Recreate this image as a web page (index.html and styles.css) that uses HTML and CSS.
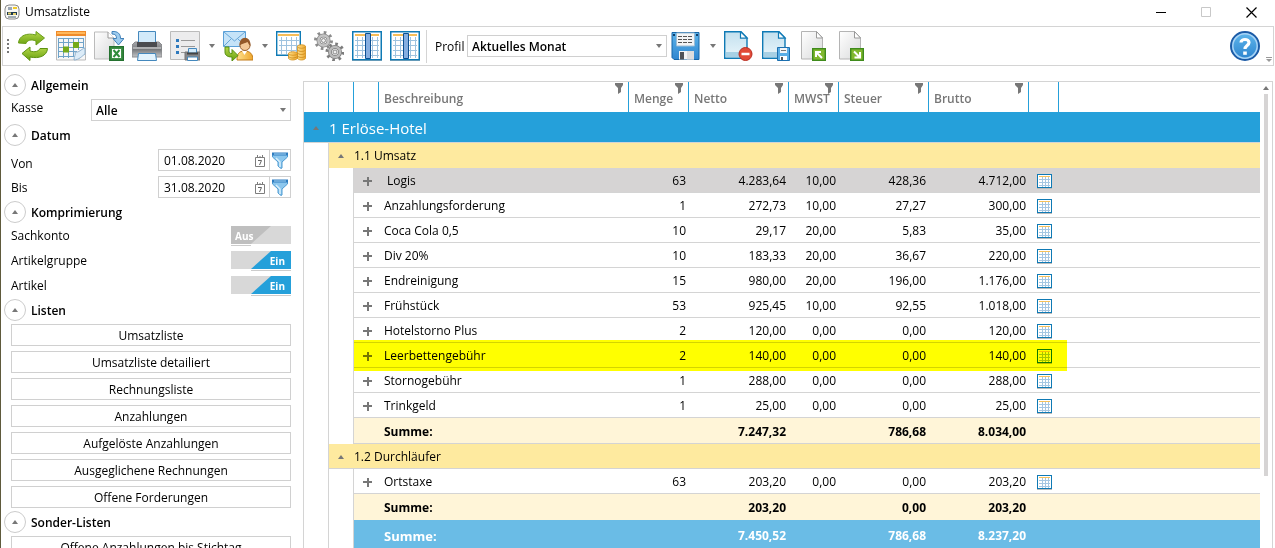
FILE: index.html
```html
<!DOCTYPE html>
<html lang="de">
<head>
<meta charset="utf-8">
<title>Umsatzliste</title>
<link rel="stylesheet" href="styles.css">
</head>
<body>
<svg class="defs" aria-hidden="true">
  <defs>
    <linearGradient id="paper" x1="0" y1="0" x2="1" y2="1"><stop offset="0" stop-color="#fff"/><stop offset="1" stop-color="#d9dadb"/></linearGradient>
    <linearGradient id="bluepaper" x1="0" y1="0" x2="0" y2="1"><stop offset="0" stop-color="#c3e0ee"/><stop offset="1" stop-color="#eaf6fb"/></linearGradient>
    <linearGradient id="green" x1="0" y1="0" x2="0" y2="1"><stop offset="0" stop-color="#b6d84b"/><stop offset="1" stop-color="#67a00f"/></linearGradient>
    <linearGradient id="steel" x1="0" y1="0" x2="0" y2="1"><stop offset="0" stop-color="#a9aaad"/><stop offset=".5" stop-color="#77797c"/><stop offset="1" stop-color="#c4c5c7"/></linearGradient>
    <linearGradient id="sky" x1="0" y1="0" x2="0" y2="1"><stop offset="0" stop-color="#5db4ea"/><stop offset="1" stop-color="#2f86d0"/></linearGradient>
    <linearGradient id="gold" x1="0" y1="0" x2="1" y2="0"><stop offset="0" stop-color="#ffe08a"/><stop offset="1" stop-color="#eda62d"/></linearGradient>
    <symbol id="cells" viewBox="0 0 15 15">
      <rect x="0" y="14" width="15" height="1" fill="#bcbcbc"/>
      <rect x=".5" y=".5" width="14" height="13" fill="#fff" stroke="#0f7ab5"/>
      <path d="M2 2.500h11" stroke="#f7c25b"/>
      <path d="M2 5.500h11M2 8.500h11M2 11.500h11M5.500 3v10M8.500 3v10M11.500 3v10" stroke="#a5c6e2"/>
    </symbol>
    <symbol id="filter" viewBox="0 0 8 11"><path d="M0 0h8v2L6 5v4L3 11V5L0 2z" fill="#777"/></symbol>
    <symbol id="funnel" viewBox="0 0 18 18">
      <path d="M1.500 3v3l5.500 5v4l3 2.500 1-.5v-6l5.500-5V3z" fill="#8cc7ee" stroke="#4f9bd2"/>
      <path d="M1 1.500h16v3H1z" fill="#2e7cc0"/><path d="M3 3h12" stroke="#a9d7f5"/><path d="M5 7l4 4v5" stroke="#d8effc" fill="none" stroke-width="1.500"/>
    </symbol>
    <symbol id="calendar" viewBox="0 0 12 13">
      <path d="M1.500 3.500h9v9h-9zM3.500 1v3M6 2v2M8.500 1v3" fill="none" stroke="#7d7d7d"/>
      <path d="M4 6.500h3.500L5.500 11" fill="none" stroke="#666"/>
    </symbol>
    <symbol id="columns" viewBox="0 0 30 30">
      <rect x="0" y="29" width="30" height="1" fill="#bbb"/>
      <rect x=".75" y=".75" width="28.500" height="28" fill="#fff" stroke="#0f7ab5" stroke-width="1.500"/>
      <path d="M3 4h24" stroke="#f6bd57" stroke-width="2"/>
      <path d="M3 9.500h24M3 14.500h24M3 19.500h24M3 24.500h24M5.500 6v21M10.500 6v21M20.500 6v21M25.500 6v21" stroke="#9fc3df"/>
      <path d="M13.500 2.500h5v25h-5z" fill="#86aee0" stroke="#0b4f92"/>
    </symbol>
    <symbol id="greypage" viewBox="0 0 28 30">
      <path d="M1.500.5h15l6 6v21.500h-21z" fill="url(#paper)" stroke="#b4b4b4"/>
      <path d="M16.500.5v6.500h6z" fill="#fff" stroke="#999"/>
      <rect x="12.700" y="17.700" width="12.600" height="11.600" fill="#80b82f" stroke="#3f8b1c" stroke-width="1.400"/>
    </symbol>
    <symbol id="bluepage" viewBox="0 0 28 30">
      <path d="M.7.7h16.300l6 6v20.600H.7z" fill="url(#bluepaper)" stroke="#0f7ab5" stroke-width="1.400"/>
      <path d="M2 21h20v5H2z" fill="#a7d0e4"/>
      <path d="M16.500.7v6.500h6.500z" fill="#fff" stroke="#0f7ab5" stroke-width="1.200"/>
    </symbol>
  </defs>
</svg>
<div class="window">
  <header class="titlebar">
    <svg class="app-icon" viewBox="0 0 16 16"><rect x="1" y="1" width="14" height="14" rx="4" fill="#f8f8f4" stroke="#8a8a8a"/><path d="M4 3h4v3H4z" fill="#9aa6b5"/><path d="M9 3h4v2H9z" fill="#f1c92a"/><path d="M3 8h10v3H3z" fill="#1f3a50"/><path d="M4 8.500h3v2H4zM9 9h3v2H9z" fill="#e8d470"/><path d="M4 13h8" stroke="#4d6272"/></svg>
    <h1 class="title">Umsatzliste</h1>
    <div class="window-controls">
      <button class="window-button" aria-label="Minimieren"><svg viewBox="0 0 11 11"><path d="M0 5.500h10" stroke="#000"/></svg></button>
      <button class="window-button" aria-label="Maximieren" disabled><svg viewBox="0 0 11 11"><path d="M.5.5h9v9h-9z" fill="none" stroke="#c8c8c8"/></svg></button>
      <button class="window-button" aria-label="Schließen"><svg viewBox="0 0 11 11"><path d="M.5.5l10 10M10.500.5l-10 10" stroke="#000" stroke-width="1.200"/></svg></button>
    </div>
  </header>

  <div class="toolbar" role="toolbar">
    <span class="grip"></span>
    <div class="tools">
      <button class="tool" aria-label="Aktualisieren"><svg viewBox="0 0 30 30">
        <path d="M.5 12C1 4.500 9 1.500 18 4V.5l8.500 6.500L18 14v-4C13 8 9.500 9 8 12.500z" fill="url(#green)" stroke="#6a9d1a"/>
        <path d="M29.500 17.500c-.5 7.500-8.500 10.500-17.500 8.500v3.500L4 22.500l8-6.500v4c5 1.500 8.500.5 10-2.500z" fill="url(#green)" stroke="#5d9210"/></svg></button>
      <button class="tool" aria-label="Kalender"><svg viewBox="0 0 30 30">
        <path d="M.5 1h29v28H.5z" fill="#f7f7f7" stroke="#bbb"/><path d="M0 0h30v5H0z" fill="#ef8b2a"/><path d="M1 2h28" stroke="#ffb85c" stroke-width="2"/>
        <path d="M3 7.500h24M3 11.500h24M3 16.500h24M3 20.500h18M3 25.500h15M2.500 7v20M7.500 7v20M12.500 7v20M17.500 7v18M22.500 7v12M27.500 7v10" stroke="#6fa3c9"/>
        <path d="M17 11h6v6h-6zM7 15.500h6v6H7z" fill="#74a919"/><path d="M18 29c0-4 2-5 1-8 4 1 6-3 10-4v6c-3 2-6 6-11 6z" fill="#dcecf8" stroke="#8fb2cf"/></svg></button>
      <button class="tool" aria-label="Excel-Export"><svg viewBox="0 0 30 30">
        <path d="M.5 1H14l6 6v21H.5z" fill="url(#paper)" stroke="#bbb"/><path d="M14 1v6h6" fill="#fff" stroke="#999"/>
        <path d="M18 .5c6-.5 8.500 2.500 8.500 7H30l-5.500 6.500L19 7.500h3.500c0-3-1-4.500-4.500-4.500z" fill="#9ccbee" stroke="#4080b8"/>
        <rect x="15.700" y="15.700" width="13.600" height="13.600" fill="#3e9147" stroke="#24712f" stroke-width="1.400"/><path d="M18 18h9v9h-9z" fill="#fff"/><path d="M19.500 19l6 7M25.500 19l-6 7" stroke="#2f8d3b" stroke-width="2"/></svg></button>
      <button class="tool" aria-label="Drucken"><svg viewBox="0 0 30 30">
        <path d="M3 11h24l3 3v12H0V14z" fill="url(#steel)" stroke="#8b8c8f"/><path d="M6.500.5h17V12h-17z" fill="#d2eafa" stroke="#4488bd"/><path d="M5 11h20v5H5z" fill="#4b4c50"/>
        <path d="M1 17h28" stroke="#ddd"/><path d="M6.500 22.500h17l1 7h-19z" fill="#e3f3fd" stroke="#4488bd"/></svg></button>
      <button class="tool" aria-label="Druckvorschau"><svg viewBox="0 0 30 30">
        <path d="M.5.5h29v28H.5z" fill="#ececed" stroke="#bbb"/><path d="M6 8h3v3H6zM6 14h3v3H6zM6 20h3v3H6z" fill="#2d79bd"/><path d="M11 9.500h14M11 15.500h14M11 21.500h5" stroke="#999"/>
        <path d="M15 21h15v8H15z" fill="#85878a" stroke="#777"/><path d="M18.500 17.500h8V22h-8z" fill="#d2eafa" stroke="#4488bd"/><path d="M17 21.500h11v2H17z" fill="#444"/><path d="M17.500 26h10v3.500h-10z" fill="#fff" stroke="#4488bd"/></svg></button>
      <button class="drop" aria-label="Druckoptionen"></button>
      <button class="tool" aria-label="E-Mail senden"><svg viewBox="0 0 30 30">
        <path d="M.5.5h22v15H.5z" fill="#c5e3f8" stroke="#5ba0d8"/><path d="M1 1l10.500 9L22 1M1 15l7-7M22 15l-7-7" fill="none" stroke="#66a6d8"/>
        <path d="M14 29c0-6 2-9 7.500-9s8.500 3 8.500 9z" fill="url(#gold)" stroke="#c37c1a"/><path d="M19 20l2.500 4 2.500-4z" fill="#fff"/><circle cx="22" cy="14.500" r="5" fill="#f3c898" stroke="#996130"/><path d="M16.500 15c-1-11 12-11 11 0-2-1-2-3-3-4-3 2-6 1-8 4z" fill="#94592a"/>
        <path d="M2 16h4v4c0 2 1 2.500 3 2.500V18.500l6 6-6 5.500v-4c-5 0-7-2-7-5z" fill="url(#green)" stroke="#569014"/></svg></button>
      <button class="drop" aria-label="E-Mail-Optionen"></button>
      <button class="tool" aria-label="Umsätze"><svg viewBox="0 0 30 30">
        <path d="M.7.7h23.600v23.600H.7z" fill="#fff" stroke="#0f7ab5" stroke-width="1.400"/><path d="M2 4h21" stroke="#f6bd57" stroke-width="2"/><path d="M3 9.500h20M3 14.500h20M3 19.500h20M5.500 6v17M10.500 6v17M15.500 6v17M20.500 6v17" stroke="#9fc3df"/>
        <g fill="url(#gold)" stroke="#d09020" stroke-width=".8"><path d="M21.500 15.500v12c2 2 6 2 8 0v-12z"/><ellipse cx="25.500" cy="15.500" rx="4" ry="1.800"/><path d="M12.500 22.500v5c2 2 6 2 9 0v-5z"/><ellipse cx="17" cy="22.500" rx="4.500" ry="1.800"/></g><path d="M21.500 19c2 2 6 2 8 0M21.500 22c2 2 6 2 8 0M21.500 25c2 2 6 2 8 0M12.500 25.500c2 2 6 2 9 0" stroke="#d09020" fill="none"/></svg></button>
      <button class="tool" aria-label="Einstellungen"><svg viewBox="0 0 30 30">
        <g fill="none"><circle cx="9.500" cy="9.500" r="8" stroke="#8c8c8c" stroke-width="3" stroke-dasharray="2.600 3.680"/><circle cx="9.500" cy="9.500" r="5" stroke="#8a8a8a" stroke-width="4"/><circle cx="9.500" cy="9.500" r="5" stroke="#c4c4c4" stroke-width="2.500"/>
        <circle cx="21" cy="21" r="8" stroke="#7c7c7c" stroke-width="3" stroke-dasharray="2.600 3.680"/><circle cx="21" cy="21" r="5" stroke="#7c7c7c" stroke-width="4"/><circle cx="21" cy="21" r="5" stroke="#bcbcbc" stroke-width="2.500"/></g><circle cx="9.500" cy="9.500" r="2" fill="#eee" stroke="#888"/><circle cx="21" cy="21" r="2" fill="#eee" stroke="#888"/></svg></button>
      <button class="tool" aria-label="Spalten fixieren"><svg><use href="#columns"/></svg></button>
      <button class="tool" aria-label="Spalten wählen"><svg><use href="#columns"/></svg></button>
    </div>
    <span class="separator"></span>
    <label class="profile-label" for="profil">Profil</label>
    <span class="select profile"><select id="profil"><option>Aktuelles Monat</option></select></span>
    <div class="tools">
      <button class="tool" aria-label="Profil speichern"><svg viewBox="0 0 30 30">
        <path d="M1 1.500h27v27H3l-2-2z" fill="url(#sky)" stroke="#1766a8"/><path d="M5.500 2h18v13h-18z" fill="#f3f4f5" stroke="#9dbdd4"/><path d="M7 5.500h15M7 8.500h15M7 11.500h15" stroke="#555" stroke-dasharray="4 1"/><path d="M2 4h2M25 4h2" stroke="#123f6b" stroke-width="2"/>
        <path d="M8 20h15v8.500H8z" fill="#f4f4f4"/><path d="M9 21h4v7.500H9z" fill="#4f5257"/><path d="M16 20h7v8.500h-7z" fill="#ddd"/></svg></button>
      <button class="drop" aria-label="Speicheroptionen"></button>
      <button class="tool" aria-label="Profil löschen"><svg viewBox="0 0 30 30"><use href="#bluepage" width="28" height="30"/><circle cx="21.500" cy="23" r="6.500" fill="#e14a37" stroke="#b92c20"/><path d="M17.500 23h8" stroke="#fff" stroke-width="2.500"/></svg></button>
      <button class="tool" aria-label="Profil speichern unter"><svg viewBox="0 0 30 30"><use href="#bluepage" width="28" height="30"/>
        <path d="M15.500 16.500h12v13h-12z" fill="#5aaee6" stroke="#1c6faf"/><path d="M18 17h7v5h-7z" fill="#f3f6f8"/><path d="M19 19.500h5" stroke="#777"/><path d="M18 25h7v4h-7z" fill="#fff"/><path d="M19 26h2v3h-2z" fill="#555"/></svg></button>
      <button class="tool" aria-label="Profil importieren"><svg viewBox="0 0 30 30"><use href="#greypage" width="28" height="30"/><path d="M16 26v-5h5M16.500 21.500L22 27" stroke="#fff" stroke-width="2" fill="none"/></svg></button>
      <button class="tool" aria-label="Profil exportieren"><svg viewBox="0 0 30 30"><use href="#greypage" width="28" height="30"/><path d="M16.500 26.500h5.500v-5.500M21.500 26L16 20.500" stroke="#fff" stroke-width="2" fill="none"/></svg></button>
    </div>
    <button class="tool help" aria-label="Hilfe"><svg viewBox="0 0 30 30"><circle cx="15" cy="15" r="14" fill="#3f8fdb" stroke="#1c5ba6" stroke-width="2"/><circle cx="15" cy="15" r="12.200" fill="url(#sky)" stroke="#a9d4f5" stroke-width="1.500"/><path d="M11 11.500C11 7.500 19 7.500 19 11.500c0 3-4 3-4 6.500" fill="none" stroke="#fff" stroke-width="3.200"/><path d="M13.200 20.500h3.600v3.300h-3.600z" fill="#fff"/></svg></button>
    <svg class="overflow" viewBox="0 0 6 5"><path d="M0 .5h6" stroke="#999"/><path d="M0 2h6L3 5z" fill="#999"/></svg>
  </div>

  <main class="content">
    <aside class="sidebar">
      <section class="section">
        <h2 class="section-head"><button class="round" aria-label="Allgemein einklappen"></button>Allgemein</h2>
        <div class="fields">
          <div class="field"><label for="kasse">Kasse</label><span class="select"><select id="kasse"><option>Alle</option></select></span></div>
        </div>
      </section>
      <section class="section">
        <h2 class="section-head"><button class="round" aria-label="Datum einklappen"></button>Datum</h2>
        <div class="fields">
          <div class="field low"><label for="von">Von</label><span class="date"><input id="von" type="text" value="01.08.2020"><button class="pick" aria-label="Kalender öffnen"><svg><use href="#calendar"/></svg></button></span><button class="funnel" aria-label="Filter Von"><svg><use href="#funnel"/></svg></button></div>
          <div class="field"><label for="bis">Bis</label><span class="date"><input id="bis" type="text" value="31.08.2020"><button class="pick" aria-label="Kalender öffnen"><svg><use href="#calendar"/></svg></button></span><button class="funnel" aria-label="Filter Bis"><svg><use href="#funnel"/></svg></button></div>
        </div>
      </section>
      <section class="section">
        <h2 class="section-head"><button class="round" aria-label="Komprimierung einklappen"></button>Komprimierung</h2>
        <div class="fields">
          <label class="switch-row">Sachkonto<span class="switch"><input type="checkbox"><span class="knob">Aus</span></span></label>
          <label class="switch-row">Artikelgruppe<span class="switch"><input type="checkbox" checked><span class="knob">Ein</span></span></label>
          <label class="switch-row">Artikel<span class="switch"><input type="checkbox" checked><span class="knob">Ein</span></span></label>
        </div>
      </section>
      <section class="section">
        <h2 class="section-head"><button class="round" aria-label="Listen einklappen"></button>Listen</h2>
        <div class="fields">
          <button class="list-button">Umsatzliste</button>
          <button class="list-button">Umsatzliste detailiert</button>
          <button class="list-button">Rechnungsliste</button>
          <button class="list-button">Anzahlungen</button>
          <button class="list-button">Aufgelöste Anzahlungen</button>
          <button class="list-button">Ausgeglichene Rechnungen</button>
          <button class="list-button">Offene Forderungen</button>
        </div>
      </section>
      <section class="section">
        <h2 class="section-head"><button class="round" aria-label="Sonder-Listen einklappen"></button>Sonder-Listen</h2>
        <div class="fields">
          <button class="list-button">Offene Anzahlungen bis Stichtag</button>
        </div>
      </section>
    </aside>

    <div class="grid">
      <table class="table">
        <colgroup><col class="c-indent"><col class="c-indent"><col class="c-indent"><col class="c-name"><col class="c-count"><col class="c-money"><col class="c-rate"><col class="c-tax"><col class="c-money"><col class="c-action"><col></colgroup>
        <thead>
          <tr><th></th><th></th><th></th>
            <th>Beschreibung<svg class="filter"><use href="#filter"/></svg></th>
            <th>Menge<svg class="filter"><use href="#filter"/></svg></th>
            <th>Netto<svg class="filter"><use href="#filter"/></svg></th>
            <th>MWST<svg class="filter"><use href="#filter"/></svg></th>
            <th>Steuer<svg class="filter"><use href="#filter"/></svg></th>
            <th>Brutto<svg class="filter"><use href="#filter"/></svg></th>
            <th></th><th></th></tr>
        </thead>
        <tbody>
          <tr class="group"><td><button class="fold" aria-label="Einklappen"></button></td><td colspan="10">1 Erlöse-Hotel</td></tr>
          <tr class="subgroup first"><td class="indent"></td><td><button class="fold" aria-label="Einklappen"></button></td><td colspan="9">1.1 Umsatz</td></tr>
          <tr class="item selected"><td class="indent"></td><td class="indent"></td><td><button class="plus" aria-label="Aufklappen"></button></td><td class="name">Logis</td><td>63</td><td>4.283,64</td><td>10,00</td><td>428,36</td><td>4.712,00</td><td><button class="detail" aria-label="Details"><svg><use href="#cells"/></svg></button></td><td></td></tr>
          <tr class="item"><td class="indent"></td><td class="indent"></td><td><button class="plus" aria-label="Aufklappen"></button></td><td class="name">Anzahlungsforderung</td><td>1</td><td>272,73</td><td>10,00</td><td>27,27</td><td>300,00</td><td><button class="detail" aria-label="Details"><svg><use href="#cells"/></svg></button></td><td></td></tr>
          <tr class="item"><td class="indent"></td><td class="indent"></td><td><button class="plus" aria-label="Aufklappen"></button></td><td class="name">Coca Cola 0,5</td><td>10</td><td>29,17</td><td>20,00</td><td>5,83</td><td>35,00</td><td><button class="detail" aria-label="Details"><svg><use href="#cells"/></svg></button></td><td></td></tr>
          <tr class="item"><td class="indent"></td><td class="indent"></td><td><button class="plus" aria-label="Aufklappen"></button></td><td class="name">Div 20%</td><td>10</td><td>183,33</td><td>20,00</td><td>36,67</td><td>220,00</td><td><button class="detail" aria-label="Details"><svg><use href="#cells"/></svg></button></td><td></td></tr>
          <tr class="item"><td class="indent"></td><td class="indent"></td><td><button class="plus" aria-label="Aufklappen"></button></td><td class="name">Endreinigung</td><td>15</td><td>980,00</td><td>20,00</td><td>196,00</td><td>1.176,00</td><td><button class="detail" aria-label="Details"><svg><use href="#cells"/></svg></button></td><td></td></tr>
          <tr class="item"><td class="indent"></td><td class="indent"></td><td><button class="plus" aria-label="Aufklappen"></button></td><td class="name">Frühstück</td><td>53</td><td>925,45</td><td>10,00</td><td>92,55</td><td>1.018,00</td><td><button class="detail" aria-label="Details"><svg><use href="#cells"/></svg></button></td><td></td></tr>
          <tr class="item"><td class="indent"></td><td class="indent"></td><td><button class="plus" aria-label="Aufklappen"></button></td><td class="name">Hotelstorno Plus</td><td>2</td><td>120,00</td><td>0,00</td><td>0,00</td><td>120,00</td><td><button class="detail" aria-label="Details"><svg><use href="#cells"/></svg></button></td><td></td></tr>
          <tr class="item"><td class="indent"></td><td class="indent"></td><td class="marked"><span class="marker"></span><button class="plus" aria-label="Aufklappen"></button></td><td class="name">Leerbettengebühr</td><td>2</td><td>140,00</td><td>0,00</td><td>0,00</td><td>140,00</td><td><button class="detail" aria-label="Details"><svg><use href="#cells"/></svg></button></td><td></td></tr>
          <tr class="item"><td class="indent"></td><td class="indent"></td><td><button class="plus" aria-label="Aufklappen"></button></td><td class="name">Stornogebühr</td><td>1</td><td>288,00</td><td>0,00</td><td>0,00</td><td>288,00</td><td><button class="detail" aria-label="Details"><svg><use href="#cells"/></svg></button></td><td></td></tr>
          <tr class="item"><td class="indent"></td><td class="indent"></td><td><button class="plus" aria-label="Aufklappen"></button></td><td class="name">Trinkgeld</td><td>1</td><td>25,00</td><td>0,00</td><td>0,00</td><td>25,00</td><td><button class="detail" aria-label="Details"><svg><use href="#cells"/></svg></button></td><td></td></tr>
          <tr class="sum"><td class="indent"></td><td class="indent"></td><td></td><td class="name">Summe:</td><td></td><td>7.247,32</td><td></td><td>786,68</td><td>8.034,00</td><td></td><td></td></tr>
          <tr class="subgroup"><td class="indent"></td><td><button class="fold" aria-label="Einklappen"></button></td><td colspan="9">1.2 Durchläufer</td></tr>
          <tr class="item"><td class="indent"></td><td class="indent"></td><td><button class="plus" aria-label="Aufklappen"></button></td><td class="name">Ortstaxe</td><td>63</td><td>203,20</td><td>0,00</td><td>0,00</td><td>203,20</td><td><button class="detail" aria-label="Details"><svg><use href="#cells"/></svg></button></td><td></td></tr>
          <tr class="sum last"><td class="indent"></td><td class="indent"></td><td></td><td class="name">Summe:</td><td></td><td>203,20</td><td></td><td>0,00</td><td>203,20</td><td></td><td></td></tr>
          <tr class="total"><td class="indent"></td><td class="indent"></td><td></td><td class="name">Summe:</td><td></td><td>7.450,52</td><td></td><td>786,68</td><td>8.237,20</td><td></td><td></td></tr>
        </tbody>
      </table>
      <div class="scrollbar"><span class="scroll-up"></span><span class="thumb"></span></div>
    </div>
  </main>
</div>
</body>
</html>
```
FILE: styles.css
```css
* { box-sizing: border-box; }

body {
  margin: 0;
  overflow: hidden;
  background: #fff;
  color: #000;
  font: 12px/16px "Open Sans", "Noto Sans", sans-serif;
}

button, input, select {
  margin: 0;
  padding: 0;
  border: 0;
  background: none;
  color: inherit;
  font: inherit;
}

svg { display: block; }
.defs { position: absolute; width: 0; height: 0; }

.window {
  display: flex;
  flex-direction: column;
  height: 100vh;
  overflow: hidden;
  border-left: 1px solid #5f5a3c;
}

/* Title bar */
.titlebar {
  display: flex;
  flex: none;
  align-items: center;
  height: 26px;
  padding: 0 18px 2px 3px;
}
.app-icon { width: 16px; height: 16px; }
.title { margin: 0 0 0 5px; font-size: 12px; font-weight: 400; }
.window-controls { display: flex; gap: 34px; margin-left: auto; }
.window-button { width: 11px; height: 11px; }
.window-button svg { width: 11px; height: 11px; }

/* Toolbar */
.toolbar {
  position: relative;
  display: flex;
  flex: none;
  align-items: center;
  height: 40px;
  margin: 0 1px;
  padding-left: 4px;
  border: 1px solid #d4d4d4;
}
.grip { width: 2px; height: 14px; margin-right: 9px; background: repeating-linear-gradient(#777 0 2px, transparent 2px 4px); }
.tools { display: flex; align-items: center; gap: 8px; }
.tool, .tool svg { width: 30px; height: 30px; }
.drop { display: grid; place-items: center; width: 7px; height: 30px; }
.drop::before, .select::after {
  content: "";
  border: 3px solid transparent;
  border-top: 4px solid #777;
  border-bottom: 0;
}
.separator { width: 1px; height: 33px; margin: 0 8px 0 6px; background: #d4d4d4; }
.profile-label { width: 32px; padding-top: 1px; }
.select { position: relative; display: block; width: 200px; height: 22px; border: 1px solid #d0d0d0; }
.select select { width: 100%; height: 20px; padding: 2px 0 0 4px; appearance: none; font-weight: 600; outline: 0; }
.select::after { position: absolute; right: 4px; top: 8px; pointer-events: none; }
.profile { margin-right: 4px; }
.help { margin: 0 13px 0 auto; }
.overflow { position: absolute; right: 1px; bottom: 3px; width: 6px; height: 5px; }

/* Content */
.content { display: flex; flex: 1; min-height: 0; padding-right: 2px; }
.sidebar { flex: none; width: 302px; padding: 8px 12px 0 3px; }
.section-head { display: flex; align-items: center; gap: 5px; height: 22px; margin: 0; padding-top: 2px; font-size: 12px; font-weight: 600; }
.round { display: grid; flex: none; place-items: center; width: 22px; height: 22px; margin-top: -2px; border: 1px solid #ccc; border-radius: 50%; }
.round::before, .fold::before {
  content: "";
  border: 3px solid transparent;
  border-bottom: 4px solid #777;
  border-top: 0;
}
.fields { display: flex; flex-direction: column; gap: 5px; padding: 3px 0 3px 7px; }
.field { display: flex; height: 22px; }
.field label { margin-right: auto; padding-top: 1px; }
.field.low label { padding-top: 7px; }
.field:not(:first-child) label { padding-top: 4px; }
.date { display: flex; align-items: center; width: 112px; height: 22px; padding: 0 3px 0 5px; border: 1px solid #d0d0d0; }
.date input { flex: 1; min-width: 0; padding-top: 2px; outline: 0; }
.pick, .pick svg { width: 12px; height: 13px; }
.funnel { display: grid; place-items: center; width: 22px; height: 22px; margin-left: -1px; border: 1px solid #d0d0d0; }
.funnel svg { width: 18px; height: 18px; }

.switch-row { display: flex; justify-content: space-between; height: 20px; line-height: 20px; }
.switch { position: relative; display: flex; width: 60px; height: 20px; background: linear-gradient(#d8d8d8, #d8d8d8) 0 0 / 100% 18px no-repeat; }
.switch input { position: absolute; inset: 0; opacity: 0; }
.knob {
  width: 40px;
  height: 18px;
  padding-left: 4px;
  background: #bfbfbf;
  clip-path: polygon(0 0, 100% 0, 50% 100%, 0 100%);
  color: #fff;
  font-size: 10px;
  font-weight: 700;
}
.switch::after { content: ""; position: absolute; left: 0; bottom: 0; width: 20px; height: 1px; background: #ccc; }
.switch input:checked + .knob {
  margin-left: auto;
  padding: 0 6px 0 0;
  background: #25a0da;
  clip-path: polygon(50% 0, 100% 0, 100% 100%, 0 100%);
  text-align: right;
}
.switch:has(input:checked)::after { left: 20px; width: 40px; }

.list-button { height: 22px; padding-top: 2px; border: 1px solid #d0d0d0; text-align: center; }

/* Grid */
.grid {
  display: flex;
  flex: 1;
  min-width: 0;
  margin-top: 15px;
  overflow: hidden;
  border: 1px solid #d4d4d4;
  border-bottom: 0;
}
.table { flex: 1; width: 0; height: min-content; table-layout: fixed; border-collapse: separate; border-spacing: 0; }
.c-indent { width: 25px; }
.c-name { width: 250px; }
.c-count { width: 60px; }
.c-money { width: 100px; }
.c-rate { width: 50px; }
.c-tax { width: 90px; }
.c-action { width: 30px; }

th {
  position: relative;
  height: 30px;
  padding: 4px 0 0 5px;
  border-right: 1px solid #25a0da;
  color: #777;
  font-weight: 600;
  text-align: left;
  white-space: nowrap;
}
th:last-child { border-right: 0; }
.filter { position: absolute; top: 1px; right: 5px; width: 8px; height: 11px; }

td { height: 25px; padding: 2px 0 0; border-bottom: 1px solid #d4d4d4; white-space: nowrap; }
.indent { border-right: 1px solid #d4d4d4; border-bottom: 0; }
.fold { display: grid; place-items: center; width: 24px; height: 18px; }

.group td { height: 31px; background: #25a0da; color: #fff; font-size: 15px; }
.subgroup td:not(.indent) { background: #feea9f; }
.subgroup.first td:not(.indent) { border-bottom-color: #feea9f; }

.item td, .sum td, .total td { padding-right: 3px; text-align: right; }
.item .name, .sum .name, .total .name { padding-left: 5px; text-align: left; }
.selected td:not(.indent) { background: #d6d4d4; }
.item.selected .name { padding-left: 8px; }
.plus {
  display: block;
  width: 9px;
  height: 9px;
  margin-left: 9px;
  background:
    linear-gradient(#777, #777) center / 9px 2px no-repeat,
    linear-gradient(#777, #777) center / 2px 9px no-repeat;
}
.detail { display: block; width: 15px; height: 15px; margin-left: 8px; }
.detail svg { width: 15px; height: 15px; }
.marked { position: relative; }
.marker {
  position: absolute;
  top: -3px;
  left: 0;
  width: 713px;
  height: 31px;
  background: #ff0;
  mix-blend-mode: multiply;
  pointer-events: none;
}

.sum td { height: 26px; font-weight: 700; }
.sum td:not(.indent) { background: #fff5d8; }
.sum.last td { border-bottom-color: #fff5d8; }
.total td { height: 31px; color: #fff; font-weight: 700; }
.total td:not(.indent) { background: #6abce6; }
.total .name { font-size: 13px; }

.scrollbar { display: flex; flex: none; flex-direction: column; align-items: center; width: 12px; padding-top: 4px; }
.scroll-up { border: 3px solid transparent; border-bottom: 4px solid #777; border-top: 0; }
.thumb { width: 4px; height: 382px; margin-top: 4px; background: #d6d4d4; }
```
